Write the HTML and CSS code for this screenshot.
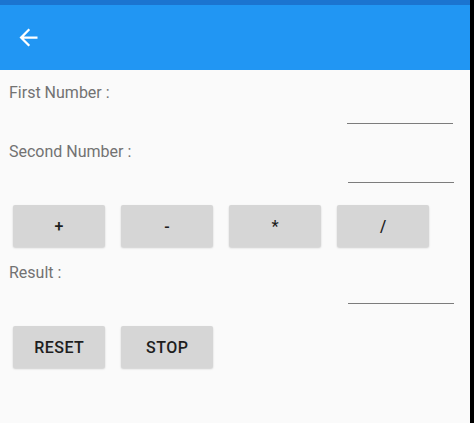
FILE: index.html
```html
<!DOCTYPE html>
<html>
<head>
<meta charset="utf-8">
<link rel="stylesheet" href="styles.css">
</head>
<body>
<div class="screen">
  <div class="statusbar"></div>
  <header class="appbar">
    <svg class="back" viewBox="0 0 24 24" width="27" height="27"><path fill="#fff" d="M20 11H7.83l5.59-5.59L12 4l-8 8 8 8 1.41-1.41L7.83 13H20v-2z"/></svg>
  </header>
  <main class="content">
    <div class="field first">
      <div class="label">First Number :</div>
      <div class="input"></div>
    </div>
    <div class="field second">
      <div class="label">Second Number :</div>
      <div class="input"></div>
    </div>
    <div class="buttons ops">
      <button class="btn">+</button>
      <button class="btn">-</button>
      <button class="btn">*</button>
      <button class="btn">/</button>
    </div>
    <div class="field result">
      <div class="label">Result :</div>
      <div class="input"></div>
    </div>
    <div class="buttons actions">
      <button class="btn">RESET</button>
      <button class="btn">STOP</button>
    </div>
  </main>
</div>
</body>
</html>
```
FILE: styles.css
```css
html, body {
  margin: 0;
  padding: 0;
  background: #000;
}
.screen {
  width: 470px;
  height: 423px;
  background: #fafafa;
  display: flex;
  flex-direction: column;
  font-family: Roboto, "Noto Sans", sans-serif;
}
.statusbar {
  height: 5px;
  background: #1b74d0;
}
.appbar {
  height: 65px;
  background: #2196f3;
  display: flex;
  align-items: center;
  padding-left: 15px;
}
.back {
  display: block;
}
.content {
  display: flex;
  flex-direction: column;
  padding-top: 12px;
}
.field {
  display: flex;
  flex-direction: column;
}
.label {
  font-size: 16px;
  line-height: 22px;
  color: #727272;
  padding-left: 9px;
}
.input {
  align-self: flex-end;
  width: 106px;
  height: 19px;
  border-bottom: 1px solid #7c7c7c;
  margin-right: 17px;
}
.second {
  margin-top: 17px;
}
.second .input, .result .input {
  margin-right: 16px;
}
.buttons {
  display: flex;
  gap: 16px;
  padding-left: 13px;
  margin-top: 22px;
}
.btn {
  width: 92px;
  height: 42px;
  border: none;
  border-radius: 2px;
  background: #d6d6d6;
  box-shadow: 0 1px 2px rgba(0,0,0,0.18);
  font-family: Roboto, "Noto Sans", sans-serif;
  font-weight: 500;
  font-size: 16px;
  letter-spacing: 0.5px;
  text-indent: 0.5px;
  color: #1e1e1e;
  padding: 0;
}
.result {
  margin-top: 15px;
}
.actions {
  margin-top: 22px;
}
```
